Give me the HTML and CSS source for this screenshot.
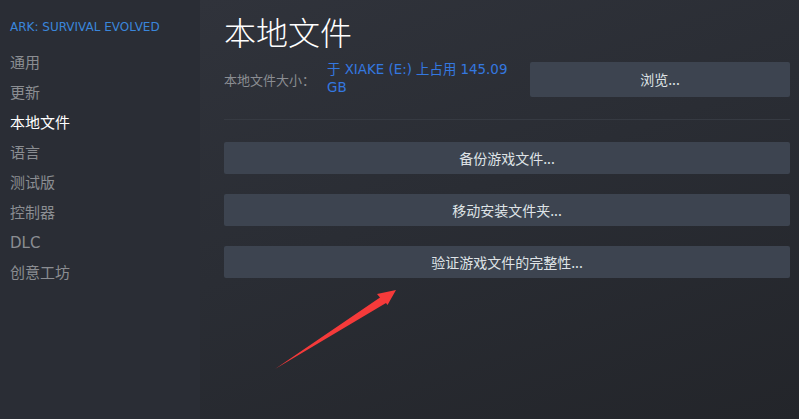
FILE: index.html
```html
<!DOCTYPE html>
<html lang="zh-CN">
<head>
  <meta charset="UTF-8" />
  <title>本地文件 - ARK: SURVIVAL EVOLVED</title>
  <link rel="stylesheet" href="styles.css">
</head>
<body>
  <aside class="sidebar">
    <div class="game-title">ARK: SURVIVAL EVOLVED</div>
    <nav class="side-nav">
      <a>通用</a>
      <a>更新</a>
      <a class="active">本地文件</a>
      <a>语言</a>
      <a>测试版</a>
      <a>控制器</a>
      <a>DLC</a>
      <a>创意工坊</a>
    </nav>
  </aside>

  <main class="content">
    <h1>本地文件</h1>
    <div class="size-row">
      <span class="size-label">本地文件大小：</span>
      <span class="size-value">于 XIAKE (E:) 上占用 145.09 GB</span>
      <button class="btn browse-btn">浏览...</button>
    </div>
    <div class="divider"></div>
    <div class="actions">
      <button class="btn">备份游戏文件...</button>
      <button class="btn">移动安装文件夹...</button>
      <button class="btn">验证游戏文件的完整性...</button>
    </div>
  </main>

  <svg class="arrow" width="799" height="419" viewBox="0 0 799 419">
    <polygon points="396,290 377,294 380,297.5 275,369 386,303 387.5,305" fill="#f53a3a" />
  </svg>
</body>
</html>
```

FILE: styles.css
```css
body {
  margin: 0;
  padding: 0;
  width: 799px;
  height: 419px;
  overflow: hidden;
  display: flex;
  background: #2a2d35;
  font-family: 'DejaVu Sans', 'Noto Sans CJK SC', sans-serif;
  color: #dfe3e6;
}
.sidebar {
  width: 200px;
  flex-shrink: 0;
  background: #2a2d35;
  padding-top: 19px;
  box-sizing: border-box;
}
.game-title {
  padding-left: 10px;
  font-size: 12px;
  line-height: 16px;
  color: #3a86db;
}
.side-nav {
  display: flex;
  flex-direction: column;
  margin-top: 13px;
}
.side-nav a {
  padding-left: 10px;
  font-size: 15px;
  line-height: 30px;
  color: #8b8d92;
  cursor: pointer;
}
.side-nav a.active {
  color: #ffffff;
}

.content {
  flex: 1;
  padding: 11px 9px 0 24px;
  background: linear-gradient(160deg, #30333b 0%, #2a2d34 45%, #23252a 100%);
}
h1 {
  margin: 0;
  font-family: 'Noto Sans CJK SC', sans-serif;
  font-weight: 300;
  font-size: 32px;
  line-height: 40px;
  color: #ffffff;
}
.size-row {
  display: flex;
  align-items: center;
  margin-top: 10px;
}
.size-label {
  font-family: 'Noto Sans CJK SC', sans-serif;
  font-size: 13px;
  color: #8b8d92;
  margin-right: 12px;
  white-space: nowrap;
}
.size-value {
  flex: 1;
  font-size: 13.4px;
  line-height: 18px;
  color: #3478e0;
}
.btn {
  display: block;
  width: 100%;
  height: 32px;
  padding: 0;
  border: none;
  border-radius: 2px;
  background: #3d4450;
  color: #dfe3e6;
  font-family: 'Noto Sans CJK SC', sans-serif;
  font-size: 14px;
  cursor: pointer;
}
.btn:hover {
  background: #464e5b;
}
.browse-btn {
  width: 260px;
  height: 35px;
  flex-shrink: 0;
  margin-left: 20px;
}
.divider {
  height: 1px;
  background: #363a42;
  margin-top: 22px;
}
.actions {
  display: flex;
  flex-direction: column;
  gap: 20px;
  margin-top: 22px;
}

.arrow {
  position: absolute;
  left: 0;
  top: 0;
  pointer-events: none;
}
```
